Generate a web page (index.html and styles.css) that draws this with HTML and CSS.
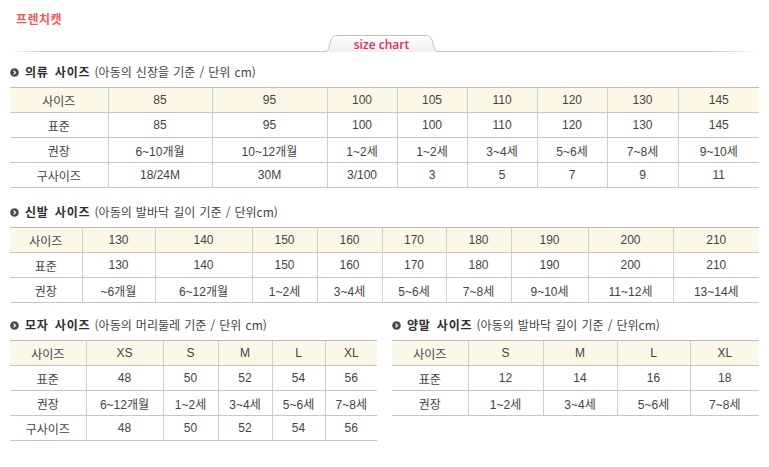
FILE: index.html
```html
<!DOCTYPE html>
<html lang="ko">
<head>
<meta charset="utf-8">
<title>프렌치캣 size chart</title>
<link rel="stylesheet" href="styles.css">
</head>
<body>
<div class="page">
  <div class="brand">프렌치캣</div>

  <div class="tabbar">
    <div class="tab">
      <svg class="tab-bg" viewBox="0 0 117 17" width="117" height="17">
        <defs>
          <linearGradient id="tg" x1="0" y1="0" x2="0" y2="1">
            <stop offset="0" stop-color="#ffffff"/>
            <stop offset="1" stop-color="#efefef"/>
          </linearGradient>
        </defs>
        <path d="M0 17 C4 17 5 15.5 6 12 L8 5 C9 2 11 0.5 15 0.5 L102 0.5 C106 0.5 108 2 109 5 L111 12 C112 15.5 113 17 117 17 Z" fill="url(#tg)"/>
        <path d="M0 16.5 C4 16.5 5 15.5 6 12 L8 5 C9 2 11 0.5 15 0.5 L102 0.5 C106 0.5 108 2 109 5 L111 12 C112 15.5 113 16.5 117 16.5" fill="none" stroke="#c2c2c2" stroke-width="1"/>
      </svg>
      <span class="tab-label">size chart</span>
    </div>
  </div>

  <section class="section s1">
    <h2 class="sec-title">
      <svg class="bullet" viewBox="0 0 9 9" width="9" height="9"><circle cx="4.5" cy="4.5" r="4.3" fill="#4a4a4a"/><path d="M3.6 2.6 L5.5 4.5 L3.6 6.4" fill="none" stroke="#fff" stroke-width="1.3"/></svg>
      <span><b>의류 사이즈</b> (아동의 신장을 기준 / 단위 cm)</span>
    </h2>
    <table class="size t1">
      <colgroup><col><col><col><col><col><col><col><col><col></colgroup>
      <tr class="head"><td>사이즈</td><td>85</td><td>95</td><td>100</td><td>105</td><td>110</td><td>120</td><td>130</td><td>145</td></tr>
      <tr><td>표준</td><td>85</td><td>95</td><td>100</td><td>100</td><td>110</td><td>120</td><td>130</td><td>145</td></tr>
      <tr><td>권장</td><td>6~10개월</td><td>10~12개월</td><td>1~2세</td><td>1~2세</td><td>3~4세</td><td>5~6세</td><td>7~8세</td><td>9~10세</td></tr>
      <tr><td>구사이즈</td><td>18/24M</td><td>30M</td><td>3/100</td><td>3</td><td>5</td><td>7</td><td>9</td><td>11</td></tr>
    </table>
  </section>

  <section class="section s2">
    <h2 class="sec-title">
      <svg class="bullet" viewBox="0 0 9 9" width="9" height="9"><circle cx="4.5" cy="4.5" r="4.3" fill="#4a4a4a"/><path d="M3.6 2.6 L5.5 4.5 L3.6 6.4" fill="none" stroke="#fff" stroke-width="1.3"/></svg>
      <span><b>신발 사이즈</b> (아동의 발바닥 길이 기준 / 단위cm)</span>
    </h2>
    <table class="size t2">
      <colgroup><col><col><col><col><col><col><col><col><col><col></colgroup>
      <tr class="head"><td>사이즈</td><td>130</td><td>140</td><td>150</td><td>160</td><td>170</td><td>180</td><td>190</td><td>200</td><td>210</td></tr>
      <tr><td>표준</td><td>130</td><td>140</td><td>150</td><td>160</td><td>170</td><td>180</td><td>190</td><td>200</td><td>210</td></tr>
      <tr><td>권장</td><td>~6개월</td><td>6~12개월</td><td>1~2세</td><td>3~4세</td><td>5~6세</td><td>7~8세</td><td>9~10세</td><td>11~12세</td><td>13~14세</td></tr>
    </table>
  </section>

  <div class="pair">
    <section class="section s3">
      <h2 class="sec-title">
        <svg class="bullet" viewBox="0 0 9 9" width="9" height="9"><circle cx="4.5" cy="4.5" r="4.3" fill="#4a4a4a"/><path d="M3.6 2.6 L5.5 4.5 L3.6 6.4" fill="none" stroke="#fff" stroke-width="1.3"/></svg>
        <span><b>모자 사이즈</b> (아동의 머리둘레 기준 / 단위 cm)</span>
      </h2>
      <table class="size t3">
        <colgroup><col><col><col><col><col><col></colgroup>
        <tr class="head"><td>사이즈</td><td>XS</td><td>S</td><td>M</td><td>L</td><td>XL</td></tr>
        <tr><td>표준</td><td>48</td><td>50</td><td>52</td><td>54</td><td>56</td></tr>
        <tr><td>권장</td><td>6~12개월</td><td>1~2세</td><td>3~4세</td><td>5~6세</td><td>7~8세</td></tr>
        <tr><td>구사이즈</td><td>48</td><td>50</td><td>52</td><td>54</td><td>56</td></tr>
      </table>
    </section>

    <section class="section s3">
      <h2 class="sec-title">
        <svg class="bullet" viewBox="0 0 9 9" width="9" height="9"><circle cx="4.5" cy="4.5" r="4.3" fill="#4a4a4a"/><path d="M3.6 2.6 L5.5 4.5 L3.6 6.4" fill="none" stroke="#fff" stroke-width="1.3"/></svg>
        <span><b>양말 사이즈</b> (아동의 발바닥 길이 기준 / 단위cm)</span>
      </h2>
      <table class="size t4">
        <colgroup><col><col><col><col><col></colgroup>
        <tr class="head"><td>사이즈</td><td>S</td><td>M</td><td>L</td><td>XL</td></tr>
        <tr><td>표준</td><td>12</td><td>14</td><td>16</td><td>18</td></tr>
        <tr><td>권장</td><td>1~2세</td><td>3~4세</td><td>5~6세</td><td>7~8세</td></tr>
      </table>
    </section>
  </div>
</div>
</body>
</html>
```

FILE: styles.css
```css
* { box-sizing: border-box; }

body {
  margin: 0;
  background: #fff;
  font-family: "Liberation Sans", "Noto Sans CJK KR", sans-serif;
  font-size: 12px;
  color: #444;
}

.page {
  width: 769px;
  padding: 0 10px;
}

.brand {
  padding: 11px 0 0 6px;
  height: 27px;
  line-height: 16px;
  font-family: "Noto Sans CJK KR", sans-serif;
  font-size: 12px;
  font-weight: bold;
  letter-spacing: 0.5px;
  color: #ef5858;
}

.tabbar {
  margin: 8px 2px 0;
  height: 17px;
  display: flex;
  align-items: flex-end;
  background: linear-gradient(to right, rgba(198,198,198,0), #c6c6c6 30px, #c6c6c6 calc(100% - 45px), rgba(198,198,198,0)) left bottom / 100% 1px no-repeat;
}

.tab {
  position: relative;
  width: 117px;
  height: 17px;
  margin-left: 311px;
  display: flex;
  justify-content: center;
  align-items: center;
}

.tab-bg {
  position: absolute;
  left: 0;
  top: 0;
  display: block;
}

.tab-label {
  position: relative;
  padding-top: 3px;
  font-family: "Open Sans", sans-serif;
  font-size: 12px;
  font-weight: 600;
  color: #e2286f;
  line-height: 14px;
}

.sec-title {
  margin: 0 0 7px;
  height: 16px;
  line-height: 16px;
  display: flex;
  align-items: center;
  gap: 6px;
  font-size: 12px;
  font-weight: normal;
  color: #444;
  font-family: "Noto Sans CJK KR", sans-serif;
  word-spacing: 0.8px;
}

.sec-title b {
  color: #2e2e2e;
  font-weight: bold;
  letter-spacing: 0.8px;
  word-spacing: 2px;
}

.bullet {
  display: block;
  flex: none;
}

.s1 { margin-top: 12px; }
.s2 { margin-top: 16px; }
.pair {
  margin-top: 14px;
  display: grid;
  grid-template-columns: 367px 367px;
  column-gap: 15px;
}

.size {
  width: 100%;
  border-collapse: collapse;
  table-layout: fixed;
}

.size tr { height: 25px; }

.size td {
  padding: 0;
  text-align: center;
  vertical-align: middle;
  border-top: 1px solid #c6c6c6;
  border-bottom: 1px solid #c6c6c6;
  border-left: 1px solid #cfcfcf;
  color: #444;
  font-family: "Liberation Sans", "Noto Sans CJK KR", sans-serif;
  font-size: 12px;
  white-space: nowrap;
}

.size td:first-child { border-left: none; }

.size tr.head td {
  background: #fbf8e7;
  border-top-color: #bdbdbd;
}

.t1 col:nth-child(1) { width: 98px; }
.t1 col:nth-child(2) { width: 104px; }
.t1 col:nth-child(3) { width: 115px; }
.t1 col:nth-child(4) { width: 70px; }
.t1 col:nth-child(5) { width: 70px; }
.t1 col:nth-child(6) { width: 70px; }
.t1 col:nth-child(7) { width: 70px; }
.t1 col:nth-child(8) { width: 71px; }
.t1 col:nth-child(9) { width: 81px; }

.t2 col:nth-child(1) { width: 72px; }
.t2 col:nth-child(2) { width: 73px; }
.t2 col:nth-child(3) { width: 97px; }
.t2 col:nth-child(4) { width: 65px; }
.t2 col:nth-child(5) { width: 65px; }
.t2 col:nth-child(6) { width: 64px; }
.t2 col:nth-child(7) { width: 65px; }
.t2 col:nth-child(8) { width: 77px; }
.t2 col:nth-child(9) { width: 85px; }
.t2 col:nth-child(10) { width: 86px; }

.t3 col:nth-child(1) { width: 76px; }
.t3 col:nth-child(2) { width: 77px; }
.t3 col:nth-child(3) { width: 55px; }
.t3 col:nth-child(4) { width: 54px; }
.t3 col:nth-child(5) { width: 53px; }
.t3 col:nth-child(6) { width: 52px; }

.t4 col:nth-child(1) { width: 76px; }
.t4 col:nth-child(2) { width: 75px; }
.t4 col:nth-child(3) { width: 74px; }
.t4 col:nth-child(4) { width: 73px; }
.t4 col:nth-child(5) { width: 69px; }
```
